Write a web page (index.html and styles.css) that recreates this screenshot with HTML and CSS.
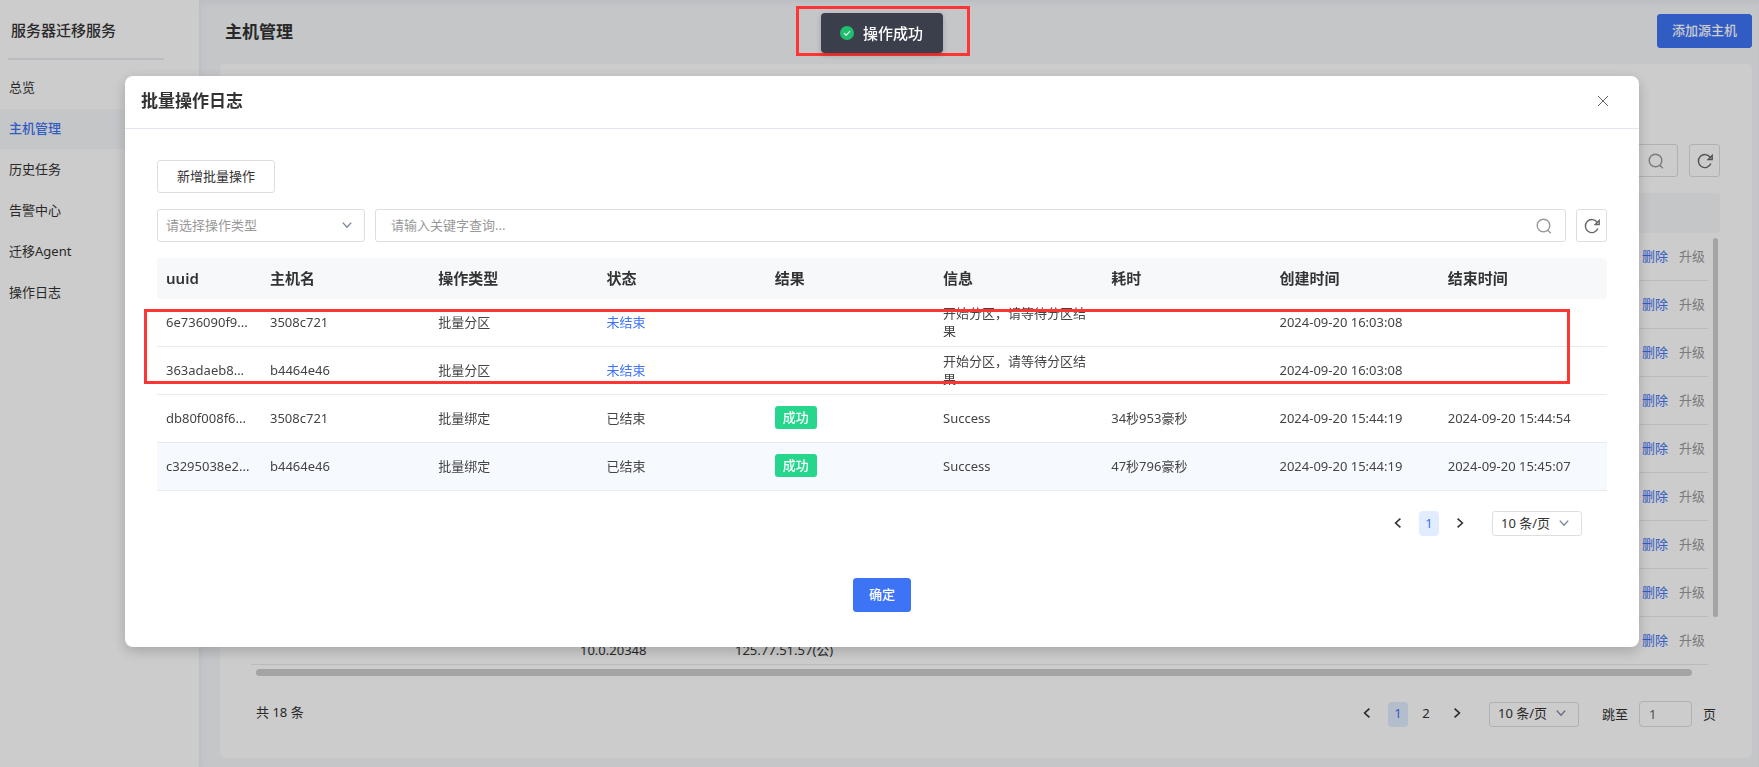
FILE: index.html
```html
<!DOCTYPE html>
<html lang="zh-CN">
<head>
<meta charset="utf-8">
<title>服务器迁移服务</title>
<link rel="stylesheet" href="styles.css">
</head>
<body>
<svg class="defs" aria-hidden="true">
  <symbol id="i-search" viewBox="0 0 16 16"><circle cx="7.5" cy="7.5" r="6.3"/><path d="M11.8 12.2 14.8 15.2"/></symbol>
  <symbol id="i-refresh" viewBox="0 0 16 16"><path d="M13.9 10.6A6.5 6.5 0 1 1 13.2 4.3"/><path class="solid" d="M15.2 2.4v4.1h-4z"/></symbol>
  <symbol id="i-down" viewBox="0 0 12 12"><path d="M1.8 3.6 6 8.2l4.2-4.6"/></symbol>
  <symbol id="i-left" viewBox="0 0 12 12"><path d="M8.4 1.6 3.6 6l4.8 4.4"/></symbol>
  <symbol id="i-right" viewBox="0 0 12 12"><path d="M3.6 1.6 8.4 6l-4.8 4.4"/></symbol>
  <symbol id="i-close" viewBox="0 0 12 12"><path d="M1 1l10 10M11 1 1 11"/></symbol>
</svg>

<div class="app">
  <aside class="sidebar">
    <h2 class="brand">服务器迁移服务</h2>
    <nav class="nav">
      <a class="nav-item" href="#">总览</a>
      <a class="nav-item active" href="#">主机管理</a>
      <a class="nav-item" href="#">历史任务</a>
      <a class="nav-item" href="#">告警中心</a>
      <a class="nav-item" href="#">迁移Agent</a>
      <a class="nav-item" href="#">操作日志</a>
    </nav>
  </aside>
  <main class="main">
    <header class="main-head">
      <h1 class="title">主机管理</h1>
      <button class="btn primary" type="button">添加源主机</button>
    </header>
    <section class="card">
      <div class="toolbar">
        <div class="search"><input class="search-input" type="text" aria-label="查询主机"><svg class="icon search-icon"><use href="#i-search"/></svg></div>
        <button class="btn square" type="button" aria-label="刷新"><svg class="icon"><use href="#i-refresh"/></svg></button>
      </div>
      <div class="host-head"></div>
      <div class="host-body">
        <table class="hosts">
          <colgroup><col class="h-lead"><col class="h-ver"><col><col class="h-act"></colgroup>
          <tbody>
            <tr><td></td><td></td><td></td><td><div class="acts"><a href="#">删除</a><span>升级</span></div></td></tr>
            <tr><td></td><td></td><td></td><td><div class="acts"><a href="#">删除</a><span>升级</span></div></td></tr>
            <tr><td></td><td></td><td></td><td><div class="acts"><a href="#">删除</a><span>升级</span></div></td></tr>
            <tr><td></td><td></td><td></td><td><div class="acts"><a href="#">删除</a><span>升级</span></div></td></tr>
            <tr><td></td><td></td><td></td><td><div class="acts"><a href="#">删除</a><span>升级</span></div></td></tr>
            <tr><td></td><td></td><td></td><td><div class="acts"><a href="#">删除</a><span>升级</span></div></td></tr>
            <tr><td></td><td></td><td></td><td><div class="acts"><a href="#">删除</a><span>升级</span></div></td></tr>
            <tr><td></td><td></td><td></td><td><div class="acts"><a href="#">删除</a><span>升级</span></div></td></tr>
            <tr><td></td><td class="low">10.0.20348</td><td class="low">125.77.51.57(公)</td><td><div class="acts"><a href="#">删除</a><span>升级</span></div></td></tr>
          </tbody>
        </table>
        <div class="v-bar"></div>
      </div>
      <div class="h-bar"></div>
      <footer class="card-foot">
        <span class="total">共 18 条</span>
        <div class="pager">
          <button class="page" type="button" aria-label="上一页"><svg class="icon arrow"><use href="#i-left"/></svg></button>
          <button class="page current" type="button">1</button>
          <button class="page second" type="button">2</button>
          <button class="page" type="button" aria-label="下一页"><svg class="icon arrow"><use href="#i-right"/></svg></button>
          <div class="select small"><select aria-label="每页条数"><option>10 条/页</option></select><svg class="icon chevron"><use href="#i-down"/></svg></div>
          <label class="jump">跳至<input class="jump-input" type="text" value="1">页</label>
        </div>
      </footer>
    </section>
  </main>
</div>

<div class="overlay">
  <section class="modal" role="dialog" aria-labelledby="dlg-title">
    <header class="modal-head">
      <h2 class="title" id="dlg-title">批量操作日志</h2>
      <button class="close" type="button" aria-label="关闭"><svg class="icon x"><use href="#i-close"/></svg></button>
    </header>
    <div class="modal-body">
      <button class="btn add" type="button">新增批量操作</button>
      <div class="filters">
        <div class="select wide"><select aria-label="操作类型"><option>请选择操作类型</option></select><svg class="icon chevron"><use href="#i-down"/></svg></div>
        <div class="search"><input class="search-input" type="text" placeholder="请输入关键字查询..." aria-label="关键字"><svg class="icon search-icon"><use href="#i-search"/></svg></div>
        <button class="btn square" type="button" aria-label="刷新"><svg class="icon"><use href="#i-refresh"/></svg></button>
      </div>
      <div class="log-wrap">
        <table class="logs">
          <colgroup><col class="l-uuid"><col span="8"></colgroup>
          <thead>
            <tr><th>uuid</th><th>主机名</th><th>操作类型</th><th>状态</th><th>结果</th><th>信息</th><th>耗时</th><th>创建时间</th><th>结束时间</th></tr>
          </thead>
          <tbody>
            <tr><td>6e736090f9...</td><td>3508c721</td><td>批量分区</td><td class="open">未结束</td><td></td><td><div class="info"><span>开始分区，请等待分区结果</span></div></td><td></td><td>2024-09-20 16:03:08</td><td></td></tr>
            <tr><td>363adaeb8...</td><td>b4464e46</td><td>批量分区</td><td class="open">未结束</td><td></td><td><div class="info"><span>开始分区，请等待分区结果</span></div></td><td></td><td>2024-09-20 16:03:08</td><td></td></tr>
            <tr><td>db80f008f6...</td><td>3508c721</td><td>批量绑定</td><td>已结束</td><td><span class="tag">成功</span></td><td>Success</td><td>34秒953豪秒</td><td>2024-09-20 15:44:19</td><td>2024-09-20 15:44:54</td></tr>
            <tr class="hover"><td>c3295038e2...</td><td>b4464e46</td><td>批量绑定</td><td>已结束</td><td><span class="tag">成功</span></td><td>Success</td><td>47秒796豪秒</td><td>2024-09-20 15:44:19</td><td>2024-09-20 15:45:07</td></tr>
          </tbody>
        </table>
        <div class="mark-rows"></div>
      </div>
      <div class="pager log-pager">
        <button class="page" type="button" aria-label="上一页"><svg class="icon arrow"><use href="#i-left"/></svg></button>
        <button class="page current" type="button">1</button>
        <button class="page" type="button" aria-label="下一页"><svg class="icon arrow"><use href="#i-right"/></svg></button>
        <div class="select small"><select aria-label="每页条数"><option>10 条/页</option></select><svg class="icon chevron"><use href="#i-down"/></svg></div>
      </div>
      <div class="modal-foot"><button class="btn primary ok" type="button">确定</button></div>
    </div>
  </section>
</div>

<div class="toast-layer">
  <div class="mark-toast">
    <div class="toast" role="status">
      <svg class="toast-icon" viewBox="0 0 14 14"><circle cx="7" cy="7" r="7"/><path d="M4 7.2 6.2 9.2 10 5.2"/></svg>
      <span>操作成功</span>
    </div>
  </div>
</div>
</body>
</html>
```
FILE: styles.css
```css
* { box-sizing: border-box; }
body {
  margin: 0;
  min-height: 100vh;
  font: 13px/18px "Noto Sans", "Noto Sans CJK SC", sans-serif;
  color: #333;
  background: #f6f8fb;
}
button, input, select { font: inherit; color: inherit; }
button { cursor: pointer; }
a { color: #3d73f5; text-decoration: none; }
h1, h2 { margin: 0; }
.defs { position: absolute; width: 0; height: 0; }
.icon { display: block; width: 16px; height: 16px; fill: none; stroke: #666; stroke-width: 1.4; }
.icon .solid { fill: #666; stroke: none; }
.title { font-size: 17px; line-height: 24px; font-weight: 600; }

/* page shell */
.app { display: flex; min-height: 100vh; }
.sidebar { flex: 0 0 199px; background: #fff; }
.brand { margin: 0 35px 0 8px; padding: 19px 3px 0; height: 60px; border-bottom: 2px solid #e9ebf2; font-size: 15px; line-height: 22px; font-weight: 500; white-space: nowrap; }
.nav { display: flex; flex-direction: column; gap: 1px; padding-top: 8px; }
.nav-item { height: 40px; padding: 0 9px; line-height: 38px; color: #333; }
.nav-item.active { background: #f6f8fb; color: #3d73f5; font-weight: 500; }
.main { flex: 1; min-width: 0; display: flex; flex-direction: column; padding: 0 7px 9px 21px; box-shadow: inset 0 6px 8px -5px #e6e8f0, inset 6px 0 8px -6px #e6e9f0; }
.main-head { display: flex; justify-content: space-between; align-items: flex-start; height: 64px; padding: 14px 0 0 5px; }
.main-head .title { padding-top: 6px; }
.card { flex: 1; padding: 80px 32px 0 31px; background: #fff; border-radius: 5px; }

/* controls */
.btn { height: 33px; padding: 0 14px 2px; border: 1px solid #dcdee2; border-radius: 3px; background: #fff; }
.btn.primary { height: 34px; border-color: #3d73f5; background: #3d73f5; color: #fff; font-weight: 500; }
.btn.square { display: flex; align-items: center; justify-content: center; flex: none; width: 31px; padding: 0; }
.btn.add { width: 118px; }
.btn.ok { width: 58px; }
.search { position: relative; flex: 1; }
.search-input { display: block; width: 100%; height: 33px; padding: 0 40px 1px 15px; border: 1px solid #dcdee2; border-radius: 3px; background: #fff; }
.search-input::placeholder { color: #999; }
.search-icon { position: absolute; right: 14px; top: 9px; stroke: #999; }
.select { position: relative; }
.select select { display: block; width: 100%; height: 100%; padding: 0 8px 2px; border: 1px solid #dcdee2; border-radius: 3px; background: #fff; appearance: none; }
.select.wide { flex: none; width: 208px; height: 33px; color: #999; }
.select.small { width: 90px; height: 25px; margin-left: 22px; }
.chevron { position: absolute; right: 12px; top: 50%; width: 12px; height: 12px; margin-top: -7px; stroke: #7d859b; pointer-events: none; }

/* host list */
.toolbar { display: flex; gap: 11px; }
.host-head { height: 40px; margin-top: 16px; background: #f6f8fa; border-radius: 4px; }
.host-body { display: flex; gap: 5px; padding-right: 2px; }
.hosts { flex: 1; table-layout: fixed; border-collapse: separate; border-spacing: 0; }
.hosts td { height: 48px; padding: 0 0 2px; border-bottom: 1px solid #e8eaec; }
.hosts td.low { vertical-align: bottom; padding-bottom: 5px; }
.h-lead { width: 329px; }
.h-ver { width: 155px; }
.h-act { width: 66px; }
.acts { display: flex; gap: 11px; }
.acts span { color: #999; }
.v-bar { width: 5px; height: 379px; margin-top: 5px; border-radius: 3px; background: #cecece; }
.h-bar { height: 7px; margin: 4px 28px 0 5px; border-radius: 4px; background: #cecece; }
.card-foot { display: flex; justify-content: space-between; padding: 25px 4px 31px 5px; }
.total { padding-top: 2px; }

/* pagination */
.pager { display: flex; align-items: center; }
.page { display: flex; align-items: center; justify-content: center; width: 20px; height: 25px; padding: 0 0 2px; border: 0; border-radius: 4px; background: none; }
.page.current { margin: 0 11px; background: #e1edff; color: #3d73f5; }
.page.second { margin: 0 11px 0 -3px; }
.arrow { width: 12px; height: 12px; stroke: #333; stroke-width: 1.6; }
.jump { display: flex; align-items: center; gap: 11px; margin-left: 23px; }
.jump-input { width: 53px; height: 26px; padding: 0 9px; border: 1px solid #dcdee2; border-radius: 4px; background: #fff; color: #666; }

/* log dialog */
.overlay { position: fixed; inset: 0; padding: 76px 120px 0 125px; background: rgba(0, 0, 0, .2); }
.modal { background: #fff; border-radius: 8px; box-shadow: 0 4px 14px rgba(0, 0, 0, .2); }
.modal-head { display: flex; justify-content: space-between; align-items: center; height: 53px; padding: 0 30px 3px 16px; border-bottom: 1px solid #e3e6f0; }
.close { padding: 0; border: 0; background: none; }
.x { width: 12px; height: 12px; stroke-width: 1; }
.modal-body { padding: 31px 32px 35px; }
.filters { display: flex; gap: 10px; margin: 16px 0; }
.log-wrap { position: relative; }
.logs { width: 100%; table-layout: fixed; border-collapse: separate; border-spacing: 0; }
.l-uuid { width: 104px; }
.logs th { height: 41px; padding: 0 9px 2px; background: #f6f8fa; text-align: left; font-size: 15px; font-weight: 600; }
.logs th:first-child { border-radius: 4px 0 0 4px; }
.logs th:last-child { border-radius: 0 4px 4px 0; }
.logs td { height: 48px; padding: 0 9px 2px; border-bottom: 1px solid #e8eaec; color: #444; white-space: nowrap; }
.logs .hover td { background: #f6faff; }
.logs .open { color: #3d73f5; }
.info { display: flex; align-items: center; height: 30px; overflow: hidden; white-space: normal; }
.tag { display: inline-block; padding: 2px 8px 3px; border-radius: 3px; background: #27d68d; color: #fff; font-weight: 500; }
.mark-rows { position: absolute; left: -13px; right: 37px; top: 51px; height: 75px; border: 3px solid #fd3535; pointer-events: none; }
.log-pager { justify-content: flex-end; padding: 20px 25px 42px 0; }
.modal-foot { display: flex; justify-content: center; }

/* toast */
.toast-layer { position: fixed; top: 6px; left: 0; right: 0; display: flex; justify-content: center; padding-left: 7px; pointer-events: none; }
.mark-toast { padding: 4px 24px 0 22px; border: 3px solid #fd3535; }
.toast { display: flex; align-items: center; gap: 9px; height: 40px; padding: 0 20px 0 19px; border-radius: 4px; background: #3b3f4c; color: #fff; font-size: 15px; font-weight: 500; box-shadow: 0 2px 6px rgba(0, 0, 0, .2); }
.toast-icon { width: 14px; height: 14px; }
.toast-icon circle { fill: #1fbf6b; }
.toast-icon path { fill: none; stroke: #fff; stroke-width: 1.1; }
```
